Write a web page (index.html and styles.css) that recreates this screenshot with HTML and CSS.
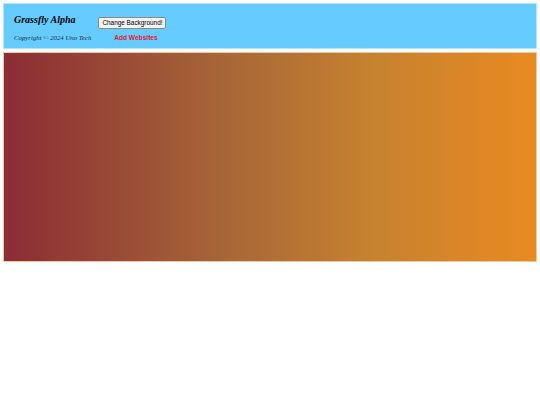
FILE: index.html
```html
<!DOCTYPE html>
<html>
<head>
<meta charset="utf-8">
<link rel="stylesheet" href="styles.css">
</head>
<body>
<header class="topbar">
  <div class="brand">
    <h1 class="title">Grassfly Alpha</h1>
    <p class="copy">Copyright © 2024 Uno Tech</p>
  </div>
  <div class="actions">
    <button class="btn">Change Background!</button>
    <a class="link" href="#">Add Websites</a>
  </div>
</header>
<main class="canvas"></main>
</body>
</html>
```

FILE: styles.css
```css
html, body {
  margin: 0;
  padding: 0;
  background: #ffffff;
}
body {
  padding: 3px;
  display: flex;
  flex-direction: column;
  gap: 3px;
}
.topbar {
  background: #66ccff;
  border: 1px solid #b8e3f7;
  height: 44px;
  display: flex;
  align-items: flex-start;
  padding: 0 0 0 10px;
  gap: 7px;
}
.brand {
  display: flex;
  flex-direction: column;
}
.title {
  margin: 10px 0 0 0;
  font-family: "Liberation Serif", serif;
  font-style: italic;
  font-weight: bold;
  font-size: 10px;
  line-height: 12px;
  color: #000;
}
.copy {
  margin: 8px 0 0 0;
  font-family: "Liberation Serif", serif;
  font-style: italic;
  font-size: 6.8px;
  line-height: 8px;
  color: #1a2a3a;
}
.actions {
  display: flex;
  flex-direction: column;
  align-items: center;
  padding-top: 13px;
}
.btn {
  font-family: "Liberation Sans", sans-serif;
  font-size: 6.4px;
  line-height: 8px;
  padding: 1px 3px;
  background: #f4f4f4;
  border: 1px solid #8a8a8a;
  border-radius: 2px;
  color: #000;
}
.link {
  margin-top: 5px;
  margin-left: 7px;
  font-family: "Liberation Sans", sans-serif;
  font-weight: bold;
  font-size: 6.6px;
  line-height: 8px;
  color: #e0192f;
  text-decoration: none;
}
.canvas {
  height: 208px;
  border: 1px solid #e9c9a9;
  background: linear-gradient(to right, #8c2c35 0%, #a66537 40%, #c7822f 70%, #e98a20 100%);
}
```
